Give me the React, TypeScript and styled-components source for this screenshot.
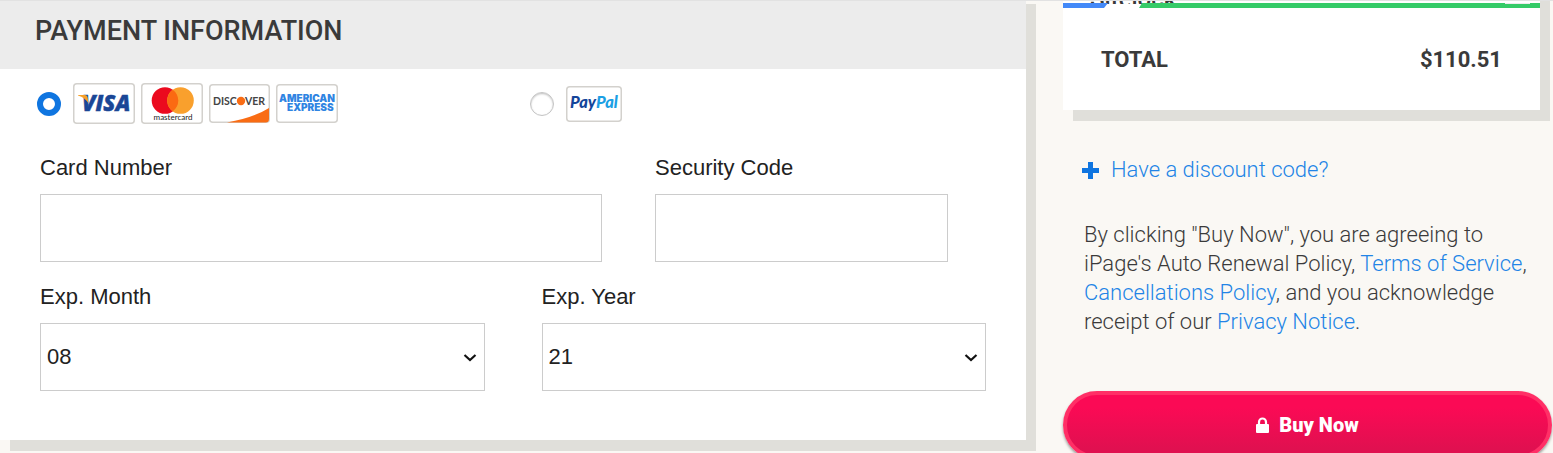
import React from "react";
import styled, { createGlobalStyle } from "styled-components";

const GlobalStyle = createGlobalStyle`
  *, *::before, *::after { box-sizing: border-box; }
  body { margin: 0; background: #faf8f4; color: #3a3a3a; font-family: Roboto, "Liberation Sans", sans-serif; }
`;

const Page = styled.main`
  display: grid;
  grid-template-columns: minmax(0, 1026fr) minmax(0, 489fr);
  column-gap: 37px;
  align-items: start;
  height: 100vh;
  padding-right: 1px;
  border-top: 1px solid #e2e2e2;
  overflow: hidden;
`;

const PaymentPanel = styled.section`
  margin-top: -8px;
  background: #fff;
  box-shadow: 10px 11px 0 #e0dfda;
`;

const PanelHeader = styled.header`
  padding: 24px 35px;
  background: #ececec;
`;

const PanelTitle = styled.h1`
  margin: 0;
  font-size: 27px;
  line-height: 28px;
  font-weight: 500;
  text-transform: uppercase;
  white-space: nowrap;
`;

const PanelBody = styled.form`
  padding: 14px 40px 49px;
`;

const Methods = styled.div`
  display: grid;
  grid-template-columns: 493px 1fr;
  align-items: center;
`;

const Method = styled.div`
  display: flex;
  align-items: center;
  height: 41px;
`;

const Radio = styled.input`
  appearance: none;
  width: 24px;
  height: 24px;
  margin: 0 12px 0 -3px;
  border: 1px solid #c4c4c4;
  border-radius: 50%;
  background: #fff;
  box-shadow: inset 0 1px 2px rgba(0, 0, 0, 0.25);
  &:checked { border: 6px solid #0f75e0; box-shadow: none; }
`;

const Logos = styled.label`
  display: flex;
  align-items: center;
  gap: 6px;
`;

const Logo = styled.svg<{ $h: number }>`
  display: block;
  width: auto;
  height: ${(p) => p.$h}px;
`;

const Row = styled.div<{ $gap: number; $top: number; $inset?: number }>`
  display: flex;
  gap: ${(p) => p.$gap}px;
  margin-top: ${(p) => p.$top}px;
  padding-right: ${(p) => p.$inset ?? 0}px;
`;

const Field = styled.div<{ $grow: number }>`
  display: flex;
  flex: ${(p) => p.$grow} 1 0;
  flex-direction: column;
  gap: 14px;
  min-width: 0;
  font-family: "Liberation Sans", Arial, sans-serif;
  font-size: 22px;
  line-height: 24px;
  color: #222;
`;

const TextBox = styled.input`
  width: 100%;
  height: 68px;
  padding: 0 6px;
  border: 1px solid #ccc;
  border-radius: 0;
  background: #fff;
  font: inherit;
  color: inherit;
`;

const SelectWrap = styled.div`
  display: grid;
  align-items: center;
  > * { grid-area: 1 / 1; }
  > svg { justify-self: end; margin-right: 8px; pointer-events: none; }
`;

const Select = styled(TextBox).attrs({ as: "select" })`
  appearance: none;
`;

const Aside = styled.aside`
  display: flex;
  flex-direction: column;
`;

const Summary = styled.section`
  margin: -18px 12px 0 0;
  background: #fff;
  box-shadow: 10px 11px 0 #e0dfda;
`;

const ItemName = styled.div`
  height: 21px;
  padding-left: 27px;
  overflow: hidden;
  font-size: 24px;
  line-height: 32px;
  font-weight: 500;
`;

const Stripe = styled.svg`
  display: block;
  width: 100%;
  height: 5px;
  margin-top: -1px;
`;

const Total = styled.div`
  display: flex;
  justify-content: space-between;
  padding: 38px 38px 36px;
  font-size: 22px;
  line-height: 28px;
  font-weight: 700;
`;

const Link = styled.a`
  color: #2284e6;
  text-decoration: none;
`;

const Discount = styled(Link)`
  display: flex;
  align-items: center;
  gap: 12px;
  margin: 46px 0 0 19px;
  font-size: 22px;
  line-height: 28px;
  font-weight: 300;
`;

const Terms = styled.p`
  margin: 36px 0 0 21px;
  font-size: 22px;
  line-height: 29px;
  font-weight: 300;
`;

const BuyButton = styled.button`
  display: flex;
  align-items: center;
  justify-content: center;
  gap: 10px;
  height: 68px;
  margin-top: 55px;
  border: 4px solid #ff2f66;
  border-radius: 34px;
  background: linear-gradient(#fb0a55 20%, #e01050 90%);
  box-shadow: 0 2px 3px rgba(0, 0, 0, 0.4);
  color: #fff;
  font-family: inherit;
  font-size: 20px;
  font-weight: 900;
`;

const Chevron = () => (
  <svg width="14" height="10" viewBox="0 0 14 10" aria-hidden="true">
    <path d="M1.500 3 7 8 12.500 3" fill="none" stroke="#111" strokeWidth="2.200" />
  </svg>
);

const frame = { fill: "#fff", stroke: "#d3d1cd", strokeWidth: 1.5 };

const Visa = () => (
  <Logo $h={41} viewBox="0 0 62 41" role="img" aria-label="Visa">
    <rect x=".75" y=".75" width="60.5" height="39.5" rx="3" {...frame} />
    <text x="9" y="28" fontFamily="Open Sans, sans-serif" fontSize="22" fontWeight="800" fontStyle="italic" fill="#1a4696" stroke="#1a4696" strokeWidth=".5">VISA</text>
    <path d="M5 12h7q2.200 0 2.600 2.500l1 6Q12 14.500 5 12.500Z" fill="#f7a128" />
  </Logo>
);

const Mastercard = () => (
  <Logo $h={41} viewBox="0 0 62 41" role="img" aria-label="Mastercard">
    <rect x=".75" y=".75" width="60.5" height="39.5" rx="3" {...frame} />
    <circle cx="24" cy="17.500" r="13.300" fill="#eb0a1e" />
    <circle cx="39.500" cy="17.500" r="13.300" fill="#f9a02d" />
    <path d="M31.750 6.700a13.300 13.300 0 0 1 0 21.600a13.300 13.300 0 0 1 0-21.600Z" fill="#fb6a12" />
    <text x="32" y="37" textAnchor="middle" fontFamily="Lato, sans-serif" fontSize="8" fill="#222">mastercard</text>
  </Logo>
);

const Discover = () => (
  <Logo $h={39} viewBox="0 0 61 39" role="img" aria-label="Discover">
    <rect x=".75" y=".75" width="59.500" height="37.500" rx="3" {...frame} />
    <path d="M18 38.500Q44 34 60 24v11q0 3.500-3.500 3.500Z" fill="#f96c14" />
    <text x="4" y="20.500" fontFamily="Lato, sans-serif" fontSize="10.500" fontWeight="700" fill="#444">DISC</text>
    <circle cx="32" cy="17" r="4.200" fill="#f96c14" />
    <text x="36" y="20.500" fontFamily="Lato, sans-serif" fontSize="10.500" fontWeight="700" fill="#444">VER</text>
  </Logo>
);

const Amex = () => (
  <Logo $h={39} viewBox="0 0 62 39" role="img" aria-label="American Express">
    <rect x=".75" y=".75" width="60.500" height="37.500" rx="3" {...frame} />
    <text x="3" y="18" fontFamily="Inter, sans-serif" fontSize="10" fontWeight="900" fill="#2f84e2">AMERICAN</text>
    <text x="11" y="27" fontFamily="Inter, sans-serif" fontSize="10" fontWeight="900" fill="#2f84e2">EXPRESS</text>
  </Logo>
);

const PayPal = () => (
  <Logo $h={36} viewBox="0 0 56 36" role="img" aria-label="PayPal">
    <rect x=".75" y=".75" width="54.500" height="34.500" rx="3" {...frame} />
    <text x="4" y="22" fontFamily="Lato, sans-serif" fontSize="16.500" fontWeight="900" fontStyle="italic" fill="#14459a">Pay<tspan fill="#1c9fe4">Pal</tspan></text>
  </Logo>
);

const Choice = ({ id, label, value }: { id: string; label: string; value: string }) => (
  <Field $grow={1}>
    <label htmlFor={id}>{label}</label>
    <SelectWrap>
      <Select id={id} defaultValue={value}>
        <option>{value}</option>
      </Select>
      <Chevron />
    </SelectWrap>
  </Field>
);

export default function App() {
  return (
    <>
      <GlobalStyle />
      <Page>
        <PaymentPanel>
          <PanelHeader>
            <PanelTitle>Payment Information</PanelTitle>
          </PanelHeader>
          <PanelBody>
            <Methods>
              <Method>
                <Radio type="radio" name="method" id="card" defaultChecked />
                <Logos htmlFor="card"><Visa /><Mastercard /><Discover /><Amex /></Logos>
              </Method>
              <Method>
                <Radio type="radio" name="method" id="paypal" />
                <Logos htmlFor="paypal"><PayPal /></Logos>
              </Method>
            </Methods>
            <Row $gap={53} $top={32} $inset={38}>
              <Field $grow={562}>
                <label htmlFor="number">Card Number</label>
                <TextBox id="number" />
              </Field>
              <Field $grow={293}>
                <label htmlFor="code">Security Code</label>
                <TextBox id="code" />
              </Field>
            </Row>
            <Row $gap={57} $top={23}>
              <Choice id="month" label="Exp. Month" value="08" />
              <Choice id="year" label="Exp. Year" value="21" />
            </Row>
          </PanelBody>
        </PaymentPanel>
        <Aside>
          <Summary>
            <ItemName>Sitelock</ItemName>
            <Stripe aria-hidden="true">
              <path d="M0 0H45L41 5H0Z" fill="#4389f8" />
              <path d="M79 0H600V5H76Z" fill="#35cb68" />
              <path d="M442 0H467V1H442Z" fill="#ececec" />
            </Stripe>
            <Total><span>TOTAL</span><span>$110.51</span></Total>
          </Summary>
          <Discount href="#discount">
            <svg width="17" height="17" viewBox="0 0 17 17" aria-hidden="true">
              <path d="M8.500 1v15M1 8.500h15" stroke="#0f75e0" strokeWidth="5" strokeLinecap="square" />
            </svg>
            Have a discount code?
          </Discount>
          <Terms>
            By clicking "Buy Now", you are agreeing to iPage's Auto Renewal Policy, <Link href="#terms">Terms of Service</Link>,{" "}
            <Link href="#cancellations">Cancellations Policy</Link>, and you acknowledge receipt of our <Link href="#privacy">Privacy Notice</Link>.
          </Terms>
          <BuyButton type="button">
            <svg width="13" height="16" viewBox="0 0 13 16" aria-hidden="true">
              <path d="M3 8V5a3.500 3.500 0 0 1 7 0v3" fill="none" stroke="#fff" strokeWidth="2.200" />
              <rect y="7" width="13" height="9" rx="1" fill="#fff" />
            </svg>
            Buy Now
          </BuyButton>
        </Aside>
      </Page>
    </>
  );
}
